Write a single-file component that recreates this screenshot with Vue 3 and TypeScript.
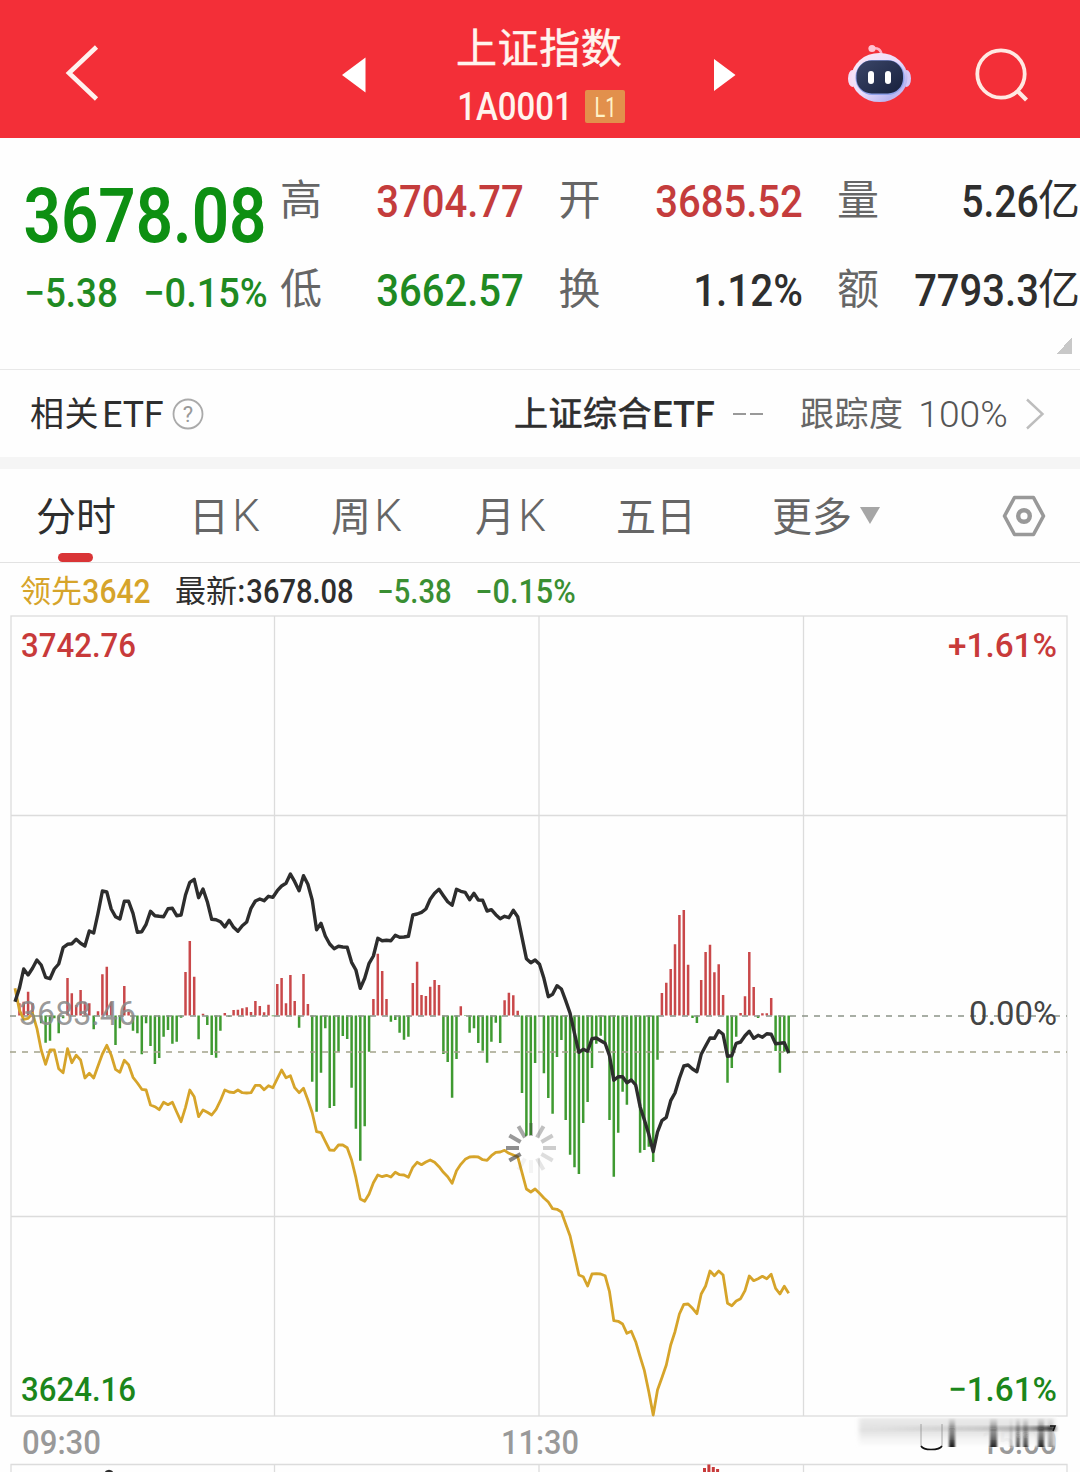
<script setup lang="ts">
import { h, type FunctionalComponent } from 'vue'

interface FitProps {
  t: string
  w: number
  cap: number
  wt?: number
}

// Condensed numerals: the text is fitted to a box of w × cap pixels.
const Fit: FunctionalComponent<FitProps> = (p) => {
  const size = p.cap / 0.711
  const bear = size * 0.02
  return h(
    'svg',
    { width: p.w, height: p.cap, style: 'display:block;overflow:visible;flex:none' },
    [
      h(
        'text',
        {
          x: -bear,
          y: p.cap,
          textLength: p.w + bear * 2,
          lengthAdjust: 'spacingAndGlyphs',
          fill: 'currentColor',
          'font-size': size,
          'font-weight': p.wt ?? 500,
          'font-family': 'Roboto, "Liberation Sans", sans-serif',
        },
        p.t,
      ),
    ],
  )
}
Fit.props = ['t', 'w', 'cap', 'wt']

interface Stat {
  label: string
  value: string
  w: number
  tone: string
  unit?: string
}

const stats: Stat[] = [
  { label: '高', value: '3704.77', w: 146, tone: 'up' },
  { label: '开', value: '3685.52', w: 146, tone: 'up' },
  { label: '量', value: '5.26', w: 76, tone: 'ink', unit: '亿' },
  { label: '低', value: '3662.57', w: 146, tone: 'down' },
  { label: '换', value: '1.12%', w: 108, tone: 'ink' },
  { label: '额', value: '7793.3', w: 123, tone: 'ink', unit: '亿' },
]

// One sample a minute, in thirds of a pixel below y = 850.
const STEP = 4.371
const px = (i: number) => 15 + STEP * i
const py = (v: number) => 850 + v / 3

const bars: number[] = [
  496, 460, 455, 425, 460, 496, 520, 578, 572, 505, 550, 505, 384, 430, 465, 420, 455, 460, 538, 484,
  373, 350, 455, 585, 535, 408, 485, 542, 550, 613, 520, 588, 642, 624, 560, 540, 581, 575, 503, 366,
  273, 380, 568, 491, 525, 615, 623, 542, 489, 500, 480, 479, 475, 472, 486, 453, 468, 487, 464, 499,
  402, 384, 460, 375, 453, 533, 372, 462, 695, 785, 668, 535, 774, 768, 605, 558, 567, 713, 836, 932,
  829, 605, 447, 311, 363, 447, 515, 510, 548, 569, 560, 399, 335, 435, 438, 410, 390, 405, 612, 636,
  743, 627, 469, 498, 548, 535, 579, 602, 638, 575, 518, 579, 451, 428, 436, 482, 729, 866, 860, 639,
  496, 670, 744, 791, 621, 570, 810, 914, 952, 972, 819, 756, 654, 581, 557, 580, 810, 980, 848, 725,
  764, 695, 710, 908, 900, 890, 936, 629, 429, 398, 357, 283, 195, 180, 344, 504, 519, 390, 306, 284,
  367, 343, 435, 698, 654, 560, 489, 439, 306, 411, 504, 490, 490, 444, 603, 668, 605, 610,
]

const index: number[] = [
  455, 415, 357, 375, 355, 330, 345, 382, 386, 357, 342, 293, 283, 281, 268, 280, 288, 243, 249, 190,
  123, 126, 177, 200, 207, 154, 154, 190, 247, 245, 223, 184, 197, 199, 200, 176, 175, 197, 195, 135,
  97, 88, 143, 117, 155, 208, 209, 215, 231, 211, 232, 244, 227, 216, 175, 153, 147, 152, 139, 142,
  122, 108, 100, 72, 95, 122, 77, 103, 150, 239, 220, 258, 282, 296, 289, 291, 292, 337, 360, 415,
  385, 340, 318, 265, 272, 271, 272, 256, 262, 261, 259, 195, 192, 187, 177, 148, 130, 118, 137, 155,
  166, 118, 124, 127, 149, 130, 150, 151, 183, 179, 194, 206, 199, 203, 181, 200, 262, 326, 338, 330,
  343, 385, 440, 433, 407, 417, 452, 490, 550, 607, 598, 604, 566, 564, 572, 580, 617, 691, 680, 680,
  698, 690, 705, 770, 810, 853, 905, 846, 812, 802, 752, 729, 685, 648, 645, 657, 665, 613, 588, 564,
  565, 542, 553, 619, 617, 580, 576, 557, 544, 565, 556, 562, 551, 553, 581, 580, 578, 609,
]

const lead: number[] = [
  415, 480, 508, 505, 490, 535, 600, 643, 600, 600, 656, 668, 596, 638, 616, 630, 684, 670, 684, 648,
  612, 586, 615, 658, 667, 631, 644, 682, 699, 718, 720, 765, 770, 779, 757, 764, 757, 786, 815, 772,
  720, 740, 800, 780, 787, 795, 778, 752, 720, 726, 728, 720, 728, 729, 728, 706, 706, 719, 707, 713,
  686, 660, 683, 677, 713, 728, 715, 750, 788, 845, 848, 874, 900, 901, 885, 885, 893, 930, 983, 1047,
  1054, 1032, 998, 975, 980, 976, 981, 967, 974, 975, 982, 952, 937, 944, 936, 930, 937, 950, 967, 980,
  1000, 962, 943, 928, 921, 920, 921, 929, 931, 917, 907, 906, 901, 910, 915, 920, 968, 1017, 1026, 1017,
  1030, 1044, 1056, 1076, 1078, 1086, 1122, 1158, 1216, 1275, 1280, 1308, 1272, 1271, 1272, 1277, 1325, 1412, 1414, 1422,
  1450, 1444, 1475, 1520, 1562, 1625, 1695, 1620, 1583, 1545, 1485, 1445, 1392, 1363, 1362, 1375, 1391, 1332, 1308, 1263,
  1277, 1263, 1275, 1360, 1367, 1353, 1346, 1322, 1278, 1292, 1286, 1279, 1286, 1273, 1315, 1332, 1309, 1330,
]

const barPath = (up: boolean) =>
  bars
    .map((v, i) => (v !== 496 && v < 496 === up ? `M${px(i).toFixed(1)} 1015.5V${py(v).toFixed(1)}` : ''))
    .join('')
const points = (s: number[]) => s.map((v, i) => `${px(i).toFixed(1)},${py(v).toFixed(1)}`).join(' ')

const upBars = barPath(true)
const downBars = barPath(false)
const indexPoints = points(index)
const leadPoints = points(lead)

interface AxisLabel {
  t: string
  x: number
  y: number
  w: number
  fill: string
}
const axis: AxisLabel[] = [
  { t: '3742.76', x: 21, y: 657, w: 115, fill: '#c83a3a' },
  { t: '+1.61%', x: 948, y: 657, w: 109, fill: '#c83a3a' },
  { t: '3624.16', x: 21, y: 1401, w: 115, fill: '#1b861b' },
  { t: '−1.61%', x: 948, y: 1401, w: 109, fill: '#1b861b' },
]
const plain: AxisLabel[] = [
  { t: '0.00%', x: 969, y: 1025, w: 88, fill: '#444' },
  { t: '3683.46', x: 19, y: 1025, w: 117, fill: 'rgba(136,136,136,0.85)' },
]
const times: AxisLabel[] = [
  { t: '09:30', x: 22, y: 1454, w: 79, fill: '#999' },
  { t: '11:30', x: 501, y: 1454, w: 78, fill: '#999' },
  { t: '15:00', x: 981, y: 1454, w: 76, fill: '#999' },
]

const spokes = [0.3, 0.3, 0.26, 0.24, 0.16, 0.12, 0.05, 0.06, 0.6, 0.55, 0.5, 0.42]
const smears = [
  { x: 949, w: 6, o: 0.9 },
  { x: 990, w: 7, o: 0.85 },
  { x: 1010, w: 2, o: 0.3 },
  { x: 1016, w: 4, o: 0.7 },
  { x: 1023, w: 5, o: 0.7 },
  { x: 1038, w: 6, o: 0.85 },
  { x: 1048, w: 5, o: 0.4 },
]
</script>

<template>
  <main class="page">
    <header class="top">
      <svg class="back" width="34" height="60" viewBox="0 0 34 60">
        <path d="M31.500 4L4 30L31.500 56" fill="none" stroke="#fff2ee" stroke-width="4.600" />
      </svg>
      <svg class="prev" width="24" height="36" viewBox="0 0 24 36"><path d="M0 18L23.500 0.500V35.500Z" fill="#fff" /></svg>
      <div class="title">
        <h1>上证指数</h1>
        <div class="code">
          <Fit t="1A0001" :w="114" :cap="27" />
          <span class="badge"><Fit t="L1" :w="21" :cap="20" :wt="400" /></span>
        </div>
      </div>
      <svg class="next" width="22" height="34" viewBox="0 0 22 34"><path d="M21.500 17L0 1V33Z" fill="#fff" /></svg>
      <svg class="robot" width="64" height="60" viewBox="0 0 64 60">
        <defs>
          <linearGradient id="shell" x1="0" y1="0" x2="1" y2="1">
            <stop offset="0" stop-color="#ffe9f3" />
            <stop offset="0.5" stop-color="#eadcfb" />
            <stop offset="0.8" stop-color="#b9b6f2" />
            <stop offset="1" stop-color="#f3c9ee" />
          </linearGradient>
          <linearGradient id="face" x1="0" y1="0" x2="1" y2="1">
            <stop offset="0" stop-color="#3b4668" />
            <stop offset="1" stop-color="#17203d" />
          </linearGradient>
        </defs>
        <path d="M24 4.500Q33 3 33.500 11" fill="none" stroke="#ffb3c6" stroke-width="2.600" />
        <circle cx="24" cy="4.500" r="3.600" fill="#ffc3d2" />
        <ellipse cx="4.500" cy="34.500" rx="4.500" ry="8.500" fill="#f6dcf4" />
        <ellipse cx="58.500" cy="34.500" rx="4.500" ry="8.500" fill="#d5c8f8" />
        <ellipse cx="31.500" cy="33.500" rx="28" ry="24.500" fill="url(#shell)" />
        <rect x="7.500" y="16" width="49" height="35" rx="17" fill="#8ea0ea" />
        <rect x="8.500" y="16.500" width="46.500" height="33" rx="15" fill="url(#face)" />
        <rect x="20" y="27" width="6" height="13" rx="3" fill="#fff" />
        <rect x="37" y="27" width="6" height="13" rx="3" fill="#fff" />
      </svg>
      <svg class="search" width="56" height="56" viewBox="0 0 56 56" fill="none" stroke="#ffe9e2" stroke-width="3.800">
        <circle cx="27" cy="27" r="23.700" />
        <path d="M43 43.500L52.500 53" stroke-width="4.200" />
      </svg>
    </header>

    <section class="quote">
      <div class="price">
        <Fit t="3678.08" :w="240" :cap="54" :wt="600" />
        <div class="change">
          <Fit t="−5.38" :w="92" :cap="28.500" />
          <Fit t="−0.15%" :w="123" :cap="28.500" />
        </div>
      </div>
      <div class="stats">
        <div v-for="s in stats" :key="s.label" class="stat">
          <span class="label">{{ s.label }}</span>
          <span class="value" :class="s.tone">
            <Fit :t="s.value" :w="s.w" :cap="31" />
            <span v-if="s.unit" class="unit">{{ s.unit }}</span>
          </span>
        </div>
      </div>
      <i class="corner"></i>
    </section>

    <section class="etf">
      <span>相关</span>
      <Fit class="e1" t="ETF" :w="60" :cap="26" :wt="400" />
      <svg class="help" width="32" height="32" viewBox="0 0 32 32">
        <circle cx="16" cy="16" r="14.500" fill="none" stroke="#aaa" stroke-width="1.800" />
        <text x="16" y="24" text-anchor="middle" font-family="Roboto, sans-serif" font-size="22" fill="#999">?</text>
      </svg>
      <span class="name">上证综合</span>
      <Fit class="e2" t="ETF" :w="61" :cap="26" />
      <span class="dashes"><i></i><i></i></span>
      <span class="track">跟踪度</span>
      <Fit class="pct" t="100%" :w="88" :cap="26" :wt="300" />
      <svg class="more" width="20" height="34" viewBox="0 0 20 34">
        <path d="M2 2.500L17.500 17L2 31.500" fill="none" stroke="#bdbdbd" stroke-width="2.400" />
      </svg>
    </section>

    <nav class="tabs">
      <span class="tab on t1"><b>分时</b></span>
      <span class="tab t2"><b>日</b><Fit t="K" :w="26" :cap="31" :wt="300" /></span>
      <span class="tab t3"><b>周</b><Fit t="K" :w="26" :cap="31" :wt="300" /></span>
      <span class="tab t4"><b>月</b><Fit t="K" :w="26" :cap="31" :wt="300" /></span>
      <span class="tab t5"><b>五日</b></span>
      <span class="tab t6"><b>更多</b></span>
      <svg class="drop" width="20" height="17" viewBox="0 0 20 17"><path d="M0 0H20L10 17Z" fill="#a6a6a6" /></svg>
      <svg class="gear" width="44" height="42" viewBox="0 0 44 42" fill="none" stroke="#999">
        <path d="M12.500 2.500H31.500L41.500 21L31.500 39.500H12.500L2.500 21Z" stroke-width="3.600" stroke-linejoin="round" />
        <circle cx="22" cy="21" r="5.800" stroke-width="4.400" />
      </svg>
    </nav>

    <div class="legend">
      <span class="lead">领先</span>
      <Fit class="lead" t="3642" :w="67" :cap="23" />
      <span class="last">最新:</span>
      <Fit t="3678.08" :w="106" :cap="23" />
      <Fit class="chg" t="−5.38" :w="73" :cap="23" />
      <Fit class="chg" t="−0.15%" :w="99" :cap="23" />
    </div>

    <svg class="chart" width="1080" height="858" viewBox="0 614 1080 858">
      <defs>
        <linearGradient id="smear" x1="0" y1="0" x2="0" y2="1">
          <stop offset="0" stop-color="#111" stop-opacity="0.020" />
          <stop offset="0.350" stop-color="#111" stop-opacity="0.400" />
          <stop offset="0.600" stop-color="#111" stop-opacity="0.600" />
          <stop offset="1" stop-color="#000" />
        </linearGradient>
        <linearGradient id="haze" x1="0" y1="0" x2="0" y2="1">
          <stop offset="0" stop-color="#ddd" stop-opacity="0.600" />
          <stop offset="0.450" stop-color="#ccc" stop-opacity="0.600" />
          <stop offset="1" stop-color="#eee" stop-opacity="0.200" />
        </linearGradient>
        <linearGradient id="streak" x1="0" y1="0" x2="1" y2="0">
          <stop offset="0" stop-color="#999" stop-opacity="0" />
          <stop offset="0.600" stop-color="#888" stop-opacity="0.250" />
          <stop offset="0.850" stop-color="#555" stop-opacity="0.400" />
          <stop offset="1" stop-color="#222" stop-opacity="0.900" />
        </linearGradient>
        <filter id="soft"><feGaussianBlur stdDeviation="1.300 0.100" /></filter>
        <filter id="softer"><feGaussianBlur stdDeviation="2 1" /></filter>
      </defs>

      <g fill="none" stroke="#dcdcdc" stroke-width="1.300">
        <rect x="11" y="616" width="1056" height="800" />
        <path d="M274.500 616V1416M539 616V1416M803.500 616V1416M11 815.500H1067M11 1216.500H1067" />
        <path d="M11 1472V1464.500H1067V1472M274.500 1464.500V1472M539 1464.500V1472M803.500 1464.500V1472" />
      </g>

      <path :d="upBars" stroke="#c9484a" stroke-width="2.500" />
      <path :d="downBars" stroke="#3f9a31" stroke-width="2.500" />
      <path d="M10 1016H1067" stroke="#8c9488" stroke-width="1.500" stroke-dasharray="6 6" />
      <path d="M10 1052H1067" stroke="#a3a38a" stroke-width="1.600" stroke-dasharray="6 6" />

      <polyline :points="leadPoints" fill="none" stroke="#d6a42a" stroke-width="2.800" stroke-linejoin="round" />
      <polyline :points="indexPoints" fill="none" stroke="#2d2d2d" stroke-width="3.400" stroke-linejoin="round" />

      <g class="num">
        <text
          v-for="a in axis"
          :key="a.t"
          :x="a.x"
          :y="a.y"
          :textLength="a.w"
          lengthAdjust="spacingAndGlyphs"
          :fill="a.fill"
        >{{ a.t }}</text>
      </g>
      <g class="num thin">
        <text
          v-for="a in plain"
          :key="a.t"
          :x="a.x"
          :y="a.y"
          :textLength="a.w"
          lengthAdjust="spacingAndGlyphs"
          :fill="a.fill"
        >{{ a.t }}</text>
      </g>
      <g class="num">
        <text
          v-for="a in times"
          :key="a.t"
          :x="a.x"
          :y="a.y"
          :textLength="a.w"
          lengthAdjust="spacingAndGlyphs"
          :fill="a.fill"
        >{{ a.t }}</text>
      </g>

      <circle cx="531" cy="1148" r="13" fill="#fff" />
      <g stroke="#333" stroke-width="4">
        <path
          v-for="(o, i) in spokes"
          :key="i"
          d="M531 1136V1123"
          :stroke-opacity="o"
          :transform="`rotate(${i * 30} 531 1148)`"
        />
      </g>

      <g>
        <rect x="859" y="1417.500" width="196" height="29" fill="#fff" fill-opacity="0.900" filter="url(#softer)" />
        <rect x="859" y="1418" width="196" height="28" fill="url(#haze)" filter="url(#softer)" />
        <rect x="870" y="1426" width="185" height="5" fill="url(#streak)" filter="url(#softer)" />
        <g filter="url(#soft)">
          <rect
            v-for="s in smears"
            :key="s.x"
            :x="s.x"
            y="1418"
            :width="s.w"
            height="29"
            fill="url(#smear)"
            :fill-opacity="s.o"
          />
        </g>
        <path d="M921 1424V1446M942 1424V1446" stroke="#777" stroke-width="1" stroke-opacity="0.600" />
        <path d="M921 1446Q923 1449.500 931 1449.500Q940 1449.500 942 1446" fill="none" stroke="#111" stroke-width="1.600" />
        <path d="M1050 1426H1055L1053 1431" fill="none" stroke="#111" stroke-width="1.600" />
      </g>

      <path d="M704.500 1472V1468M708.900 1472V1464.500M713.300 1472V1467M717.600 1472V1469" stroke="#c83a3a" stroke-width="3" />
      <path d="M106 1472.500Q109 1470 112 1472.500" fill="none" stroke="#2d2d2d" stroke-width="3" />
    </svg>
  </main>
</template>

<style>
body {
  margin: 0;
  background: #fff;
}
</style>

<style scoped>
.page {
  width: 1080px;
  height: 1472px;
  overflow: hidden;
  background: #fefefe;
  color: #2e2e2e;
  font-family: 'Noto Sans CJK SC', sans-serif;
}
.top {
  height: 138px;
  display: flex;
  align-items: flex-start;
  background: #f32f38;
  color: #fff4ee;
}
.top > svg {
  flex: none;
}
.back {
  margin: 43px 0 0 65px;
}
.prev {
  margin: 57px 0 0 243px;
}
.title {
  width: 168px;
  margin-left: 91px;
}
h1 {
  margin: 15px 0 0 -1px;
  font-size: 41px;
  line-height: 60px;
  font-weight: 400;
  letter-spacing: 0.6px;
  white-space: nowrap;
  -webkit-text-stroke: 0.5px currentColor;
}
.code {
  display: flex;
  align-items: center;
  margin-top: 15px;
  height: 33px;
  padding-left: 1px;
}
.badge {
  width: 40px;
  height: 33px;
  margin-left: 13px;
  display: flex;
  align-items: center;
  justify-content: center;
  border-radius: 2px;
  background: #e2904c;
  color: #fff3c8;
}
.next {
  margin: 58px 0 0 89px;
}
.robot {
  margin: 44px 0 0 112px;
}
.search {
  margin: 47px 0 0 62px;
}
.quote {
  position: relative;
  box-sizing: border-box;
  height: 232px;
  display: flex;
  border-bottom: 1px solid #e8e8e8;
}
.price {
  width: 242px;
  padding: 50px 0 0 25px;
  color: #0d8f12;
}
.change {
  display: flex;
  justify-content: space-between;
  margin-top: 36px;
  color: #1f8a22;
}
.stats {
  display: grid;
  grid-template-columns: repeat(3, 243px);
  grid-auto-rows: 60px;
  gap: 29px 35.500px;
  margin-left: 13px;
  padding-top: 33px;
}
.stat {
  display: flex;
  align-items: center;
  justify-content: space-between;
}
.label {
  font-size: 42px;
  line-height: 60px;
  color: #666;
  margin-top: -8px;
}
.value {
  display: flex;
  align-items: center;
}
.unit {
  font-size: 42px;
  line-height: 60px;
  margin: -8px 0 0;
}
.up {
  color: #c43c3c;
}
.down {
  color: #1f8a22;
}
.ink {
  color: #2e2e2e;
}
.corner {
  position: absolute;
  right: 8px;
  bottom: 15px;
  width: 16px;
  height: 16px;
  background: linear-gradient(135deg, transparent 50%, #c8c8c8 50%);
}
.etf {
  box-sizing: border-box;
  height: 99px;
  display: flex;
  align-items: center;
  border-bottom: 12px solid #f5f5f5;
  padding-left: 30px;
  font-size: 34px;
  line-height: 50px;
  white-space: nowrap;
}
.etf > span {
  flex: none;
  margin-top: -3px;
  letter-spacing: 0.5px;
}
.e1 {
  margin-left: 4px;
}
.help {
  flex: none;
  margin-left: 9px;
}
.etf .name {
  width: 138px;
  margin-left: 310px;
  -webkit-text-stroke: 0.6px currentColor;
}
.e2 {
  margin-left: 1px;
}
.etf .dashes {
  display: flex;
  gap: 4px;
  margin: 0 0 0 19px;
}
.dashes i {
  width: 13px;
  height: 2px;
  background: #999;
}
.etf .track {
  width: 104px;
  margin-left: 37px;
  color: #666;
}
.pct {
  margin-left: 15px;
  color: #555;
}
.more {
  flex: none;
  margin-left: 18px;
}
.tabs {
  box-sizing: border-box;
  height: 94px;
  display: flex;
  align-items: center;
  border-bottom: 1px solid #e2e2e2;
  font-size: 40px;
  line-height: 60px;
  color: #666;
}
.tab {
  position: relative;
  flex: none;
  display: flex;
  align-items: center;
  height: 93px;
  box-sizing: border-box;
  white-space: nowrap;
}
.tab b {
  font-weight: 400;
  margin-top: -4px;
}
.tab svg {
  margin-left: 4px;
}
.on {
  color: #2e2e2e;
}
.on::after {
  content: '';
  position: absolute;
  left: 22px;
  bottom: 0;
  width: 35px;
  height: 9px;
  border-radius: 5px;
  background: #d93436;
}
.t1 {
  margin-left: 36px;
}
.t2 {
  margin-left: 73px;
}
.t3 {
  margin-left: 72px;
}
.t4 {
  margin-left: 74px;
}
.t5 {
  margin-left: 71px;
}
.t6 {
  margin-left: 76px;
}
.drop {
  margin-left: 8px;
}
.gear {
  margin-left: 122px;
}
.legend {
  box-sizing: border-box;
  height: 51px;
  padding: 5px 0 0 20px;
  display: flex;
  align-items: center;
  font-size: 31px;
  line-height: 44px;
}
.legend > span {
  flex: none;
  margin-top: -4px;
}
.lead {
  color: #d6a42a;
}
.legend svg.lead {
  margin-left: 1px;
}
.legend .last {
  width: 72px;
  margin-left: 25px;
  white-space: nowrap;
}
.chg {
  margin-left: 25px;
  color: #3a8f33;
}
.chart {
  display: block;
}
.num {
  font-family: Roboto, 'Liberation Sans', sans-serif;
  font-size: 34px;
  font-weight: 500;
}
.thin {
  font-weight: 400;
}
</style>
